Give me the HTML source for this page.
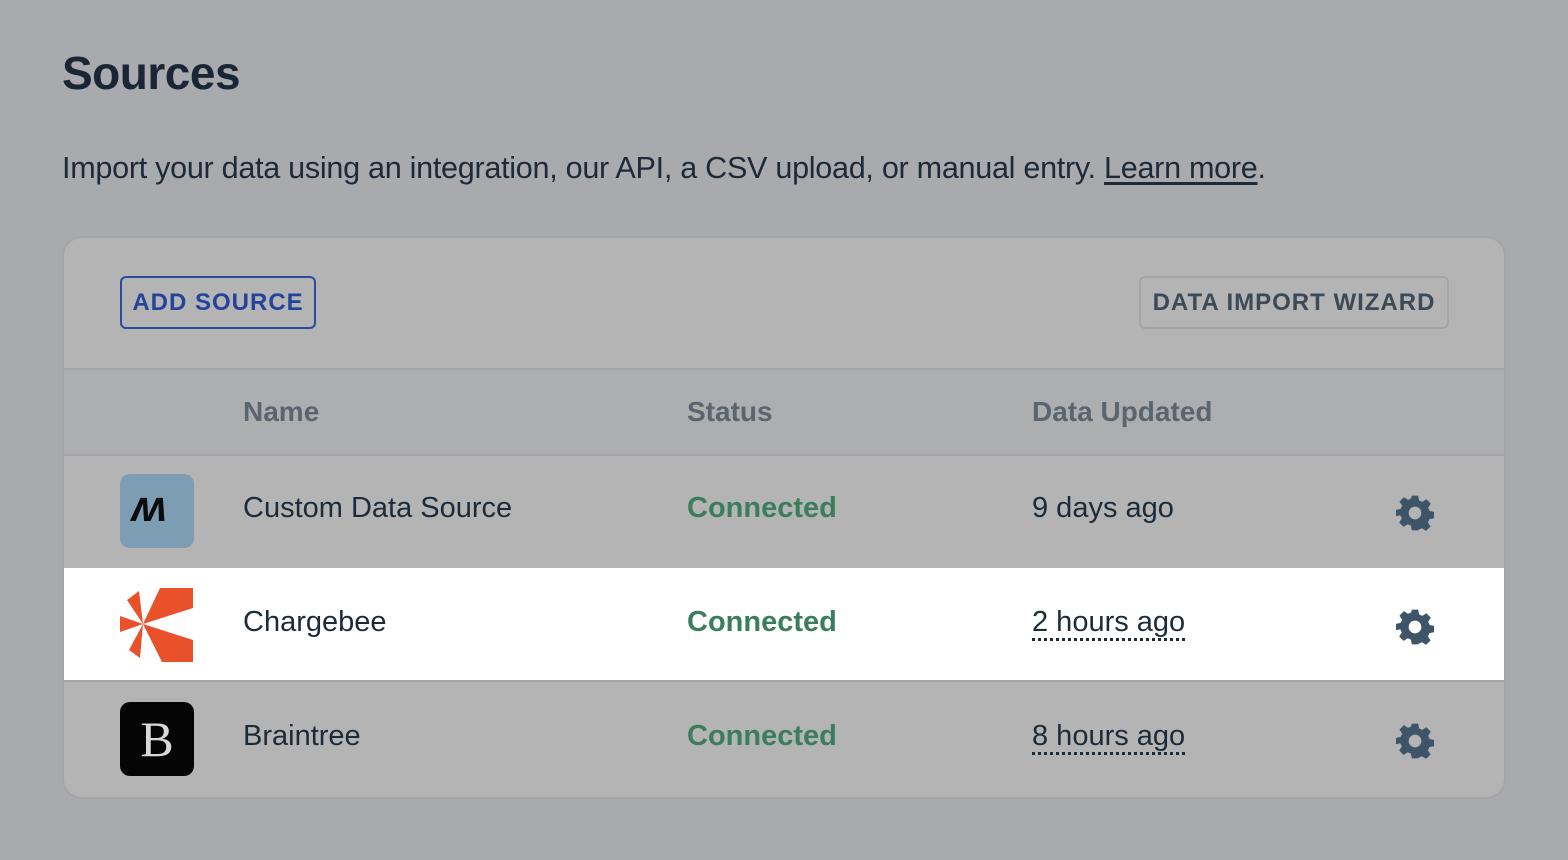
<!DOCTYPE html>
<html><head><style>
body{margin:0;width:1568px;height:860px;background:#a9aaad;font-family:"Liberation Sans",sans-serif;color:#1c2b3a;position:relative;overflow:hidden}
.abs{position:absolute}
h1{position:absolute;left:62px;top:46px;margin:0;font-size:46px;font-weight:bold;color:#1a2636;letter-spacing:-0.5px}
.intro{left:62px;top:151px;font-size:30.6px;color:#1e2a38;white-space:nowrap;letter-spacing:-0.3px}
.intro u{text-underline-offset:4px}
.card{left:62px;top:236px;width:1440px;height:559px;border:2px solid #a3a5a8;border-radius:20px;background:#b4b4b4;overflow:hidden}
.btn{position:absolute;font-size:24px;font-weight:bold;letter-spacing:1px;box-sizing:border-box;text-align:center;border-radius:6px}
.hdr{position:absolute;left:0;top:130px;width:1440px;height:84px;background:#adaeb0;border-top:2px solid #a3a5a8;border-bottom:2px solid #a3a5a8}
.th{position:absolute;top:26px;font-size:28px;color:#5a6570;font-weight:bold}
.row{position:absolute;left:0;width:1440px;height:114px}
.cell{position:absolute;top:38px;font-size:29px;white-space:nowrap}
.st{color:#3b7d5e;font-weight:bold}
.logo{position:absolute;left:56px;top:20px;width:74px;height:74px;border-radius:10px}
.gear{position:absolute;left:1332px;top:40px}
.dot{border-bottom:3px dotted #1c2b3a;padding-bottom:0}
</style></head><body>
<h1>Sources</h1>
<div class="abs intro">Import your data using an integration, our API, a CSV upload, or manual entry. <u>Learn more</u>.</div>
<div class="abs card">
  <div class="btn" style="left:56px;top:38px;width:196px;height:53px;border:2px solid #2a4ca0;color:#23449a;line-height:49px">ADD SOURCE</div>
  <div class="btn" style="left:1075px;top:38px;width:310px;height:53px;border:2px solid #a3a5a8;color:#3c4a58;line-height:49px">DATA IMPORT WIZARD</div>
  <div class="hdr">
    <div class="th" style="left:179px">Name</div>
    <div class="th" style="left:623px">Status</div>
    <div class="th" style="left:968px">Data Updated</div>
  </div>
  <div class="row" style="top:216px">
    <div class="logo" style="background:#7c9db3"><div style="position:absolute;left:12px;top:8px;font-size:44px;font-weight:bold;font-style:italic;color:#0c0c0c;letter-spacing:-6px">ʍ</div></div>
    <div class="cell" style="left:179px">Custom Data Source</div>
    <div class="cell st" style="left:623px">Connected</div>
    <div class="cell" style="left:968px">9 days ago</div>
    <svg class="gear" width="38" height="38" viewBox="0 0 24 24"><path fill="#3e5468" d="M10 1h4l.6 3 2 1 2.6-1.7 2.8 2.8L20.3 8.7l1 2 2.7.6v4l-2.9.6-.9 2 1.6 2.6-2.8 2.8-2.6-1.7-2 .9L14 23h-4l-.6-3-2-.9-2.6 1.7-2.8-2.8 1.7-2.6-1-2L0 14v-4l2.9-.6 1-2L2.2 4.8 5 2l2.6 1.7 2-.9zM12 8a4 4 0 1 0 0 8 4 4 0 1 0 0-8z"/></svg>
  </div>
  <div class="row" style="top:330px;background:#fff;height:112px">
    <svg class="logo" viewBox="0 0 74 74" style="border-radius:0"><g fill="#e9512b"><polygon points="23,36 40,0 73,0 73,20"/><polygon points="23,36 73,52 73,74 42,74"/><polygon points="23,36 7,12 19,3"/><polygon points="23,36 0,28 0,44"/><polygon points="23,36 9,62 20,70"/></g></svg>
    <div class="cell" style="left:179px">Chargebee</div>
    <div class="cell st" style="left:623px">Connected</div>
    <div class="cell" style="left:968px"><span class="dot">2 hours ago</span></div>
    <svg class="gear" width="38" height="38" viewBox="0 0 24 24"><path fill="#3e5468" d="M10 1h4l.6 3 2 1 2.6-1.7 2.8 2.8L20.3 8.7l1 2 2.7.6v4l-2.9.6-.9 2 1.6 2.6-2.8 2.8-2.6-1.7-2 .9L14 23h-4l-.6-3-2-.9-2.6 1.7-2.8-2.8 1.7-2.6-1-2L0 14v-4l2.9-.6 1-2L2.2 4.8 5 2l2.6 1.7 2-.9zM12 8a4 4 0 1 0 0 8 4 4 0 1 0 0-8z"/></svg>
  </div>
  <div class="row" style="top:442px;border-top:2px solid #a3a5a8">
    <div class="logo" style="background:#050505;top:20px"><div style="position:absolute;left:0;width:74px;top:8px;text-align:center;font-family:'Liberation Serif',serif;font-size:50px;color:#d8d8d8">B</div></div>
    <div class="cell" style="left:179px">Braintree</div>
    <div class="cell st" style="left:623px">Connected</div>
    <div class="cell" style="left:968px"><span class="dot">8 hours ago</span></div>
    <svg class="gear" width="38" height="38" viewBox="0 0 24 24"><path fill="#3e5468" d="M10 1h4l.6 3 2 1 2.6-1.7 2.8 2.8L20.3 8.7l1 2 2.7.6v4l-2.9.6-.9 2 1.6 2.6-2.8 2.8-2.6-1.7-2 .9L14 23h-4l-.6-3-2-.9-2.6 1.7-2.8-2.8 1.7-2.6-1-2L0 14v-4l2.9-.6 1-2L2.2 4.8 5 2l2.6 1.7 2-.9zM12 8a4 4 0 1 0 0 8 4 4 0 1 0 0-8z"/></svg>
  </div>
</div>
</body></html>
